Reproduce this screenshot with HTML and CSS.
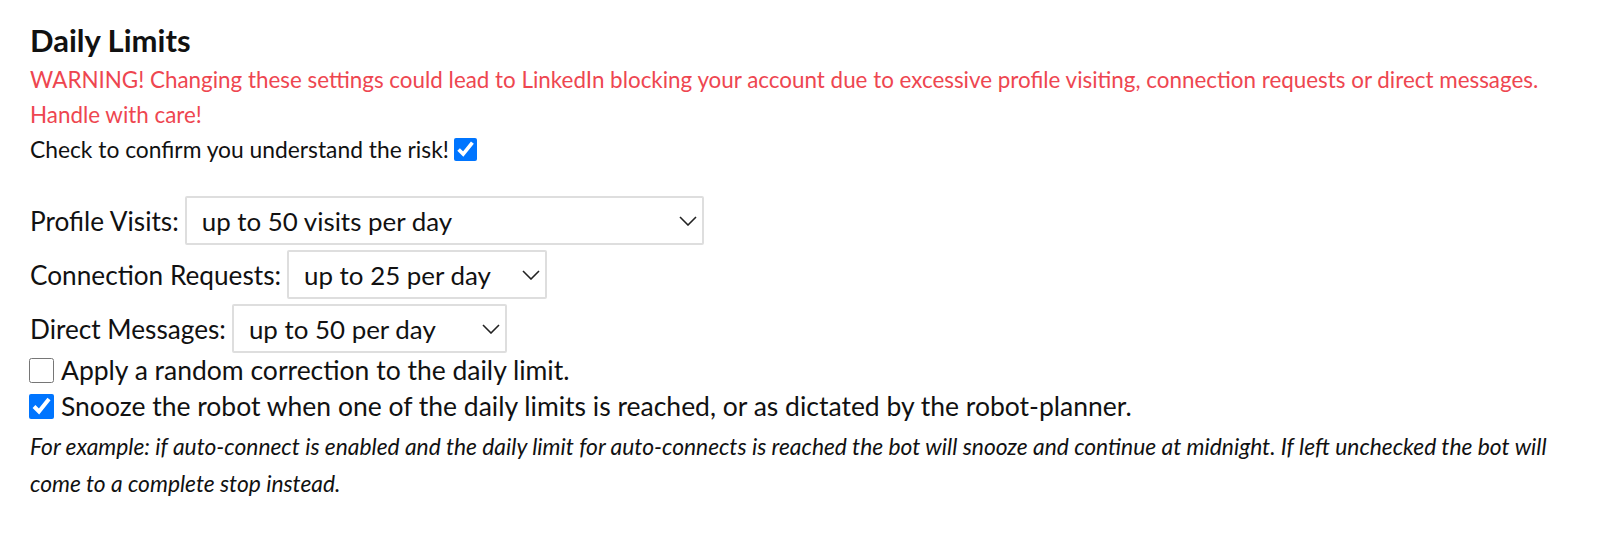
FILE: index.html
```html
<!DOCTYPE html>
<html lang="en">
<head>
  <meta charset="UTF-8" />
  <title>Daily Limits</title>
  <link rel="stylesheet" href="styles.css">
</head>
<body>

  <div class="settings">
    <h3 class="title">Daily Limits</h3>
    <p class="warning">WARNING! Changing these settings could lead to LinkedIn blocking your account due to excessive profile visiting, connection requests or direct messages. Handle with care!</p>
    <label class="confirm">Check to confirm you understand the risk! <input type="checkbox" checked></label>

    <div class="limits">
      <div class="limit-row">
        <label for="visits">Profile Visits:</label>
        <span class="select-wrap">
          <select id="visits" class="visits">
            <option>up to 50 visits per day</option>
          </select>
          <svg class="chevron" width="18" height="10" viewBox="0 0 18 10"><polyline points="1,1 9,9 17,1" fill="none" stroke="#222" stroke-width="1.6"/></svg>
        </span>
      </div>
      <div class="limit-row">
        <label for="requests">Connection Requests:</label>
        <span class="select-wrap">
          <select id="requests" class="requests">
            <option>up to 25 per day</option>
          </select>
          <svg class="chevron" width="18" height="10" viewBox="0 0 18 10"><polyline points="1,1 9,9 17,1" fill="none" stroke="#222" stroke-width="1.6"/></svg>
        </span>
      </div>
      <div class="limit-row">
        <label for="messages">Direct Messages:</label>
        <span class="select-wrap">
          <select id="messages" class="messages">
            <option>up to 50 per day</option>
          </select>
          <svg class="chevron" width="18" height="10" viewBox="0 0 18 10"><polyline points="1,1 9,9 17,1" fill="none" stroke="#222" stroke-width="1.6"/></svg>
        </span>
      </div>
    </div>

    <label class="option first"><input type="checkbox"> Apply a random correction to the daily limit.</label>
    <label class="option"><input type="checkbox" checked> Snooze the robot when one of the daily limits is reached, or as dictated by the robot-planner.</label>
    <p class="hint">For example: if auto-connect is enabled and the daily limit for auto-connects is reached the bot will snooze and continue at midnight. If left unchecked the bot will come to a complete stop instead.</p>
  </div>

</body>
</html>
```

FILE: styles.css
```css
body {
  margin: 0;
  background: #fff;
  color: #111;
  font-family: Lato, 'Noto Sans', sans-serif;
}

.settings {
  padding: 22px 34px 0 30px;
}

.title {
  font-size: 31px;
  font-weight: 700;
  line-height: 36px;
  margin: 0;
}

.warning {
  color: #ee4650;
  font-size: 22.4px;
  line-height: 35px;
  margin: 4px 0 0 0;
}

.confirm {
  display: flex;
  align-items: center;
  gap: 5px;
  font-size: 22.8px;
  line-height: 35px;
}

.confirm input {
  width: 23px;
  height: 23px;
  margin: 0;
}

.limits {
  display: flex;
  flex-direction: column;
  gap: 5px;
  margin-top: 29px;
}

.limit-row {
  display: flex;
  align-items: center;
  gap: 6px;
  font-size: 26.2px;
}

.select-wrap {
  position: relative;
  display: inline-block;
  height: 49px;
}

.select-wrap select {
  appearance: none;
  -webkit-appearance: none;
  height: 49px;
  padding: 0 40px 0 15px;
  border: 2px solid #dedede;
  border-radius: 2px;
  background: #fff;
  color: #111;
  font-family: Lato, 'Noto Sans', sans-serif;
  font-size: 25.9px;
}

.select-wrap .chevron {
  position: absolute;
  right: 7px;
  top: 20px;
  pointer-events: none;
}

select.visits { width: 519px; }
select.requests { width: 260px; }
select.messages { width: 275px; }

.option {
  display: flex;
  align-items: center;
  gap: 7px;
  font-size: 26.5px;
  line-height: 36px;
}

.option.first {
  margin-top: -1px;
}

.option input {
  width: 25px;
  height: 25px;
  margin: 0 0 0 -1px;
}

.hint {
  font-style: italic;
  font-size: 22.8px;
  line-height: 37px;
  margin: 4px 0 0 0;
}
```
